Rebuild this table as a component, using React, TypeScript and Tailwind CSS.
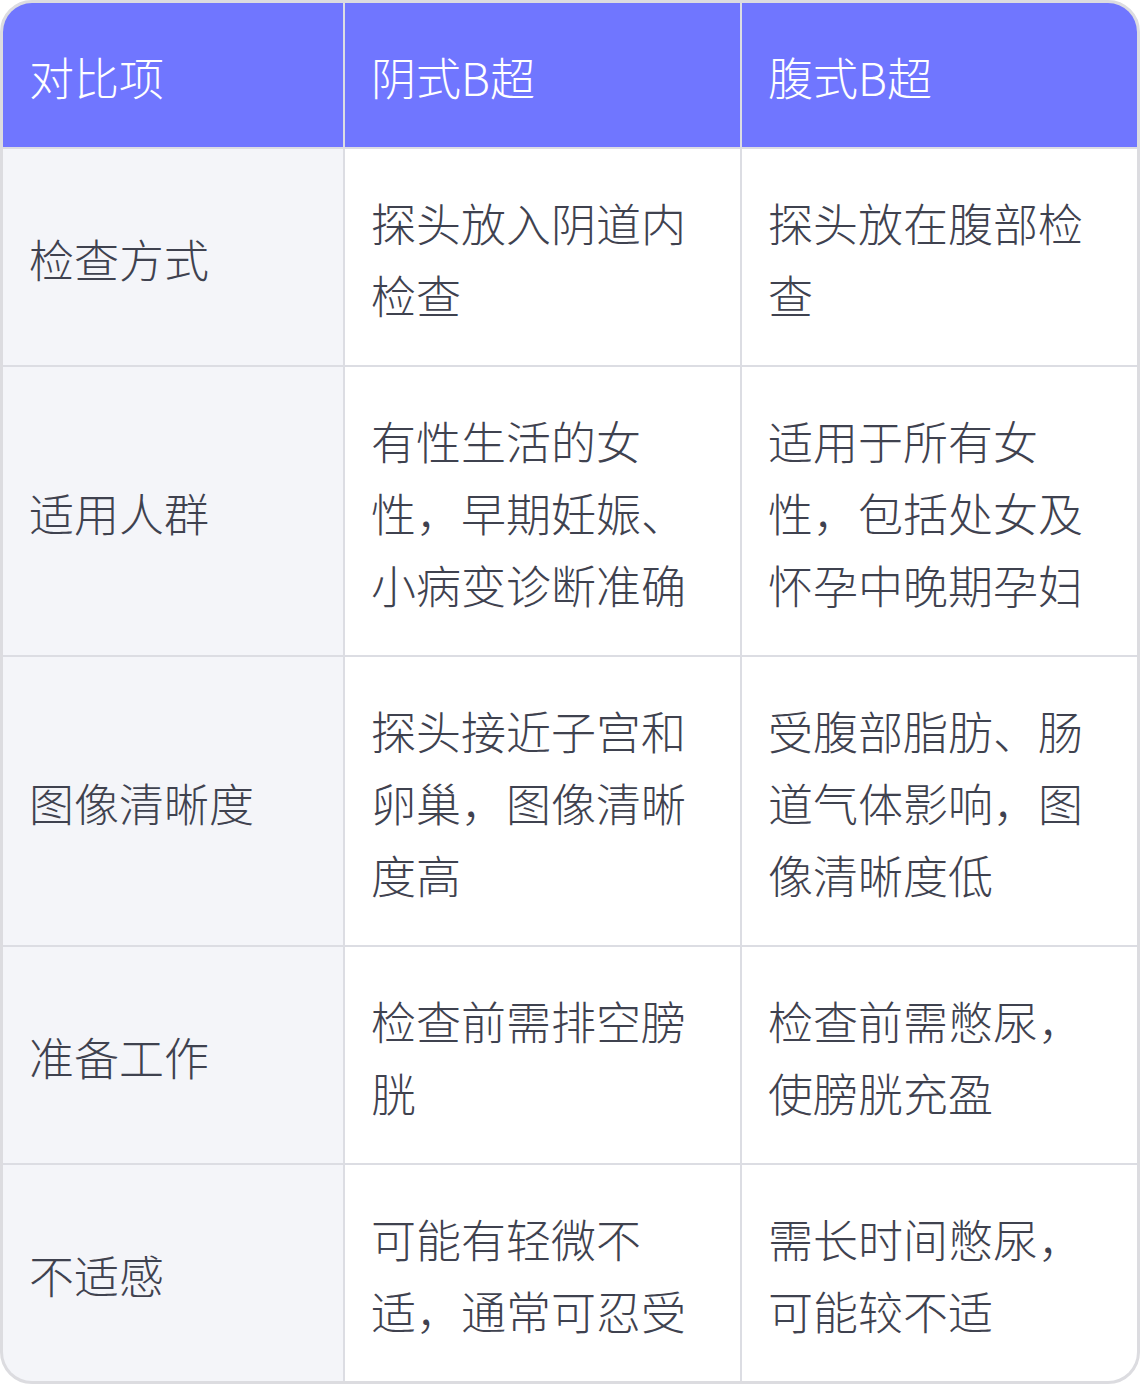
import React from "react";

const rows: [string, string, string][] = [
  ["检查方式", "探头放入阴道内检查", "探头放在腹部检查"],
  ["适用人群", "有性生活的女性，早期妊娠、小病变诊断准确", "适用于所有女性，包括处女及怀孕中晚期孕妇"],
  ["图像清晰度", "探头接近子宫和卵巢，图像清晰度高", "受腹部脂肪、肠道气体影响，图像清晰度低"],
  ["准备工作", "检查前需排空膀胱", "检查前需憋尿，使膀胱充盈"],
  ["不适感", "可能有轻微不适，通常可忍受", "需长时间憋尿，可能较不适"],
];

export default function App() {
  return (
    <div
      className="w-[1140px] h-[1384px] bg-white"
      style={{ fontFamily: '"Noto Sans CJK SC Light", "Noto Sans CJK SC DemiLight", "Noto Sans CJK SC", "Noto Sans", sans-serif' }}
    >
      <div className="w-[1140px] border-[3px] border-[#dcdce0] rounded-[32px] overflow-hidden bg-[#dcdde3]">
        <div className="grid grid-cols-[340px_395px_395px] gap-[2px] text-[45px] leading-[72px] font-light">
          {["对比项", "阴式B超", "腹式B超"].map((h) => (
            <div key={h} className="bg-[#7076ff] text-white pl-[26px] pr-[20px] pt-[38px] pb-[34px] h-[144px] flex items-center">
              {h}
            </div>
          ))}
          {rows.map((r) => (
            <React.Fragment key={r[0]}>
              <div className="bg-[#f4f5f9] text-[#3f424f] pl-[26px] pr-[20px] pt-[38px] pb-[34px] flex items-center">{r[0]}</div>
              <div className="bg-white text-[#3f424f] pl-[26px] pr-[20px] pt-[38px] pb-[34px] flex items-center">{r[1]}</div>
              <div className="bg-white text-[#3f424f] pl-[26px] pr-[20px] pt-[38px] pb-[34px] flex items-center">{r[2]}</div>
            </React.Fragment>
          ))}
        </div>
      </div>
    </div>
  );
}
